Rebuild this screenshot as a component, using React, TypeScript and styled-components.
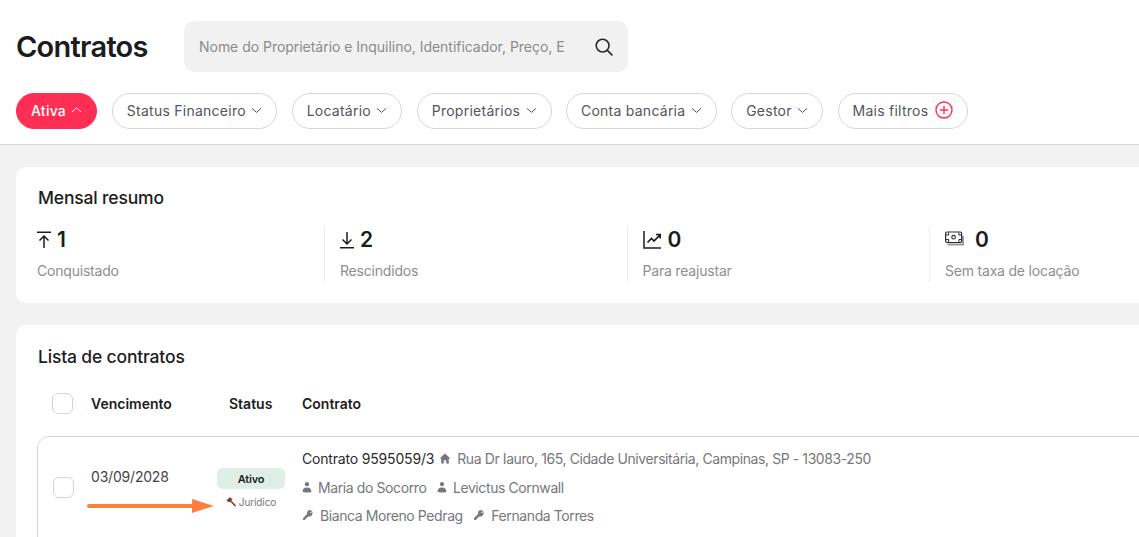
import React from "react";
import styled, { createGlobalStyle } from "styled-components";

const Global = createGlobalStyle`
  html, body {
    margin: 0;
    padding: 0;
    background: #f2f2f2;
    overflow: hidden;
  }
  body {
    font-family: Inter, "Liberation Sans", sans-serif;
    color: #1d1d1f;
  }
  * { box-sizing: border-box; }
`;

const Page = styled.div`
  width: 1139px;
  height: 537px;
  overflow: hidden;
`;

const Header = styled.header`
  height: 145px;
  background: #fff;
  border-bottom: 1px solid #d9d9d9;
  padding: 21px 16px 0;
`;

const TopRow = styled.div`
  display: flex;
  align-items: center;
  gap: 35px;
`;

const Title = styled.h1`
  margin: 0;
  width: 133px;
  font-size: 29px;
  line-height: 51px;
  font-weight: 600;
  letter-spacing: -0.75px;
  white-space: nowrap;
  color: #1c1c1e;
`;

const Search = styled.div`
  width: 444px;
  height: 51px;
  background: #f1f1f1;
  border-radius: 10px;
  display: flex;
  align-items: center;
  justify-content: space-between;
  padding: 0 14px 0 15px;
`;

const Placeholder = styled.span`
  width: 366px;
  overflow: hidden;
  white-space: nowrap;
  font-size: 14px;
  letter-spacing: -0.03px;
  color: #8b8b8b;
`;

const Chips = styled.div`
  display: flex;
  gap: 14.4px;
  margin-top: 21px;
`;

const Chip = styled.div<{ $active?: boolean }>`
  height: 36px;
  padding: 0 14px 2px;
  border-radius: 18px;
  display: flex;
  align-items: center;
  gap: 5.4px;
  font-size: 14px;
  letter-spacing: 0.25px;
  white-space: nowrap;
  font-weight: ${(p) => (p.$active ? 500 : 400)};
  background: ${(p) => (p.$active ? "#ff2e55" : "#fff")};
  color: ${(p) => (p.$active ? "#fff" : "#55555a")};
  border: 1px solid ${(p) => (p.$active ? "#ff2e55" : "#d6d6d6")};
`;

const MoreChip = styled(Chip)`
  gap: 7px;
`;

const Card = styled.section`
  width: 1200px;
  margin-left: 16px;
  background: #fff;
  border-radius: 10px;
`;

const SummaryCard = styled(Card)`
  height: 136px;
  margin-top: 22px;
  padding: 19px 21px 0;
`;

const ListCard = styled(Card)`
  height: 240px;
  margin-top: 22px;
  padding: 20px 21px 0;
`;

const CardTitle = styled.h2`
  margin: 0 0 0 1px;
  font-size: 17.5px;
  line-height: 24px;
  font-weight: 500;
  letter-spacing: -0.17px;
  color: #1c1c1e;
`;

const Stats = styled.div`
  display: flex;
  margin-top: 17px;
`;

const Stat = styled.div`
  width: 302.5px;
  flex: none;
  height: 55px;
  padding-left: 15px;
  border-left: 1px solid #ececec;
  &:first-child {
    padding-left: 0;
    border-left: 0;
    width: 287px;
  }
`;

const StatTop = styled.div`
  display: flex;
  align-items: center;
  gap: 6px;
  height: 25px;
`;

const StatValue = styled.span<{ $gap?: number }>`
  font-size: 21px;
  font-weight: 600;
  line-height: 24px;
  margin-left: ${(p) => p.$gap ?? 0}px;
  color: #1c1c1e;
`;

const StatLabel = styled.div`
  margin-top: 9px;
  font-size: 14px;
  line-height: 20px;
  letter-spacing: -0.2px;
  color: #8e8e8e;
`;

const TableHead = styled.div`
  display: flex;
  align-items: center;
  height: 24px;
  margin-top: 22px;
  padding-left: 15px;
  font-size: 14px;
  font-weight: 600;
  color: #1c1c1e;
`;

const Check = styled.span`
  display: block;
  width: 21px;
  height: 21px;
  flex: none;
  background: #fff;
  border: 1px solid #d4d4d4;
  border-radius: 6px;
`;

const HeadCell = styled.span<{ $w: number }>`
  width: ${(p) => p.$w}px;
  flex: none;
`;

const Row = styled.div`
  position: relative;
  display: flex;
  margin-top: 21px;
  height: 120px;
  border: 1px solid #d6d6d6;
  border-radius: 12px;
  padding: 0 0 0 15px;
`;

const RowCheck = styled(Check)`
  margin-top: 40px;
`;

const DateCell = styled.div`
  width: 143px;
  flex: none;
  padding: 31px 0 0 17px;
  font-size: 14px;
  line-height: 18px;
  letter-spacing: -0.2px;
  color: #444448;
`;

const StatusCell = styled.div`
  width: 68px;
  flex: none;
  margin-top: 31px;
  display: flex;
  flex-direction: column;
  align-items: center;
`;

const Badge = styled.span`
  width: 68px;
  height: 21px;
  border-radius: 6px;
  background: #dfefe7;
  display: flex;
  align-items: center;
  justify-content: center;
  font-size: 11px;
  font-weight: 600;
  letter-spacing: -0.2px;
  color: #1c1c1e;
`;

const Tag = styled.span`
  display: flex;
  align-items: center;
  gap: 2px;
  margin-top: 6px;
  font-size: 10px;
  letter-spacing: -0.1px;
  line-height: 14px;
  white-space: nowrap;
  color: #77777c;
`;

const ContractCell = styled.div`
  margin-left: 17px;
  padding-top: 12px;
  display: flex;
  flex-direction: column;
  gap: 11px;
`;

const Line = styled.div`
  display: flex;
  align-items: center;
  height: 18px;
  font-size: 14px;
  letter-spacing: -0.4px;
  white-space: nowrap;
  color: #77777c;
  &:last-child {
    margin-top: -1px;
  }
`;

const Strong = styled.span`
  color: #2b2b2e;
  letter-spacing: -0.18px;
  margin-right: 5px;
`;

const Address = styled.span`
  display: flex;
  align-items: center;
  gap: 6px;
  letter-spacing: -0.41px;
`;

const Person = styled.span`
  display: flex;
  align-items: center;
  gap: 6px;
  margin-right: 10.5px;
`;

const Arrow = styled.svg`
  position: absolute;
  left: 49px;
  top: 61px;
`;

const Chevron = ({ up, color = "#55555a" }: { up?: boolean; color?: string }) => (
  <svg width="11" height="8" viewBox="0.5 0 11 8" fill="none" stroke={color} strokeWidth="1">
    <path d={up ? "M1.5 6 6 1.8 10.5 6" : "M1.5 2.4 6 6.4 10.5 2.4"} />
  </svg>
);

const PersonIcon = () => (
  <svg width="10" height="12" viewBox="1 0 10 12" fill="#77777c">
    <circle cx="6" cy="3.2" r="2.1" />
    <path d="M1.7 11c-.3-2.8 1.2-4.4 4.3-4.4s4.6 1.6 4.3 4.4c-.1.6-8.5.6-8.6 0z" />
  </svg>
);

const KeyIcon = () => (
  <svg width="12" height="12" viewBox="0 0 13 13" fill="#77777c">
    <path d="M8.6 1.2a3.2 3.2 0 0 0-3.1 4.2L1.2 9.7v2.1h2.3v-1.3h1.3V9.2h1.1l1.1-1.1A3.2 3.2 0 1 0 8.6 1.2zm1 1.6a.8.8 0 1 1 0 1.6.8.8 0 0 1 0-1.6z" />
  </svg>
);

const App = () => {
  return (
    <Page>
      <Global />
      <Header>
        <TopRow>
          <Title>Contratos</Title>
          <Search>
            <Placeholder>Nome do Proprietário e Inquilino, Identificador, Preço, Endereço</Placeholder>
            <svg width="20" height="20" viewBox="0 0 20 20" fill="none" stroke="#26262a" strokeWidth="1.6">
              <circle cx="8.6" cy="8.6" r="6.4" />
              <path d="m13.4 13.4 5 5" />
            </svg>
          </Search>
        </TopRow>
        <Chips>
          <Chip $active>
            Ativa <Chevron up color="#fff" />
          </Chip>
          <Chip>
            Status Financeiro <Chevron />
          </Chip>
          <Chip>
            Locatário <Chevron />
          </Chip>
          <Chip>
            Proprietários <Chevron />
          </Chip>
          <Chip>
            Conta bancária <Chevron />
          </Chip>
          <Chip>
            Gestor <Chevron />
          </Chip>
          <MoreChip>
            Mais filtros
            <svg width="18" height="18" viewBox="0 0 18 18" fill="none" stroke="#ff2e55" strokeWidth="1.4">
              <circle cx="9" cy="9" r="8" />
              <path d="M9 4.8v8.4M4.8 9h8.4" />
            </svg>
          </MoreChip>
        </Chips>
      </Header>

      <SummaryCard>
        <CardTitle>Mensal resumo</CardTitle>
        <Stats>
          <Stat>
            <StatTop>
              <svg width="14" height="18" viewBox="0 0 14 18" fill="none" stroke="#1c1c1e" strokeWidth="1.5">
                <path d="M0 1.2h14M7 17V5M2.5 9.5 7 5l4.5 4.5" />
              </svg>
              <StatValue>1</StatValue>
            </StatTop>
            <StatLabel>Conquistado</StatLabel>
          </Stat>
          <Stat>
            <StatTop>
              <svg width="14" height="18" viewBox="0 0 14 18" fill="none" stroke="#1c1c1e" strokeWidth="1.5">
                <path d="M0 16.8h14M7 1v12M2.5 8.5 7 13l4.5-4.5" />
              </svg>
              <StatValue>2</StatValue>
            </StatTop>
            <StatLabel>Rescindidos</StatLabel>
          </Stat>
          <Stat>
            <StatTop>
              <svg width="19" height="19" viewBox="0 0 19 19" fill="none" stroke="#1c1c1e" strokeWidth="1.5">
                <path d="M1 1v17h17" />
                <path d="m4.5 12.5 4-4 2.5 2.5 6-6.2M13 4.5h4.2v4" strokeWidth="1.7" />
              </svg>
              <StatValue>0</StatValue>
            </StatTop>
            <StatLabel>Para reajustar</StatLabel>
          </Stat>
          <Stat>
            <StatTop>
              <svg width="19" height="17" viewBox="0 0 19 17" fill="none" stroke="#2c2c30">
                <path d="M2.5 13.5h15.5V5" stroke="#9a9a9a" strokeWidth="2" />
                <rect x=".6" y="1" width="16" height="10.5" rx="1.4" strokeWidth="1.2" />
                <circle cx="8.6" cy="6.2" r="1.8" strokeWidth="1.1" />
                <path d="M1 4h2.6V1.5M16.5 4h-2.6V1.5M1 8.5h2.6V11M16.5 8.5h-2.6V11" strokeWidth="1" />
              </svg>
              <StatValue $gap={5}>0</StatValue>
            </StatTop>
            <StatLabel>Sem taxa de locação</StatLabel>
          </Stat>
        </Stats>
      </SummaryCard>

      <ListCard>
        <CardTitle>Lista de contratos</CardTitle>
        <TableHead>
          <Check />
          <HeadCell $w={18} />
          <HeadCell $w={138}>Vencimento</HeadCell>
          <HeadCell $w={73}>Status</HeadCell>
          <HeadCell $w={80}>Contrato</HeadCell>
        </TableHead>
        <Row>
          <RowCheck />
          <DateCell>03/09/2028</DateCell>
          <StatusCell>
            <Badge>Ativo</Badge>
            <Tag>
              <svg width="11" height="10" viewBox="0 0 11 10" fill="none" stroke="#8c2f2a">
                <path d="M3.5 2.8 9.5 9" strokeWidth="1.5" />
                <path d="M.8 3.2 4.2.5l2 2-3.2 2.8z" fill="#8c2f2a" strokeWidth=".5" />
              </svg>
              Jurídico
            </Tag>
          </StatusCell>
          <ContractCell>
            <Line>
              <Strong>Contrato 9595059/3</Strong>
              <Address>
                <svg width="12" height="11" viewBox="0 0 12 11" fill="#77777c">
                  <path d="M6 .6.6 5.6h1.6V10.4h2.6V7.2h2.4v3.2h2.6V5.6h1.6z" />
                </svg>
                Rua Dr Iauro, 165, Cidade Universitária, Campinas, SP - 13083-250
              </Address>
            </Line>
            <Line>
              <Person>
                <PersonIcon />
                Maria do Socorro
              </Person>
              <Person>
                <PersonIcon />
                Levictus Cornwall
              </Person>
            </Line>
            <Line>
              <Person>
                <KeyIcon />
                Bianca Moreno Pedrag
              </Person>
              <Person>
                <KeyIcon />
                Fernanda Torres
              </Person>
            </Line>
          </ContractCell>
          <Arrow width="130" height="16" viewBox="0 0 130 16">
            <path d="M2 8h106" stroke="#ff7f3f" strokeWidth="4" strokeLinecap="round" />
            <path d="M105 1l22 7-22 7z" fill="#ff7f3f" />
          </Arrow>
        </Row>
      </ListCard>
    </Page>
  );
};

export default App;
